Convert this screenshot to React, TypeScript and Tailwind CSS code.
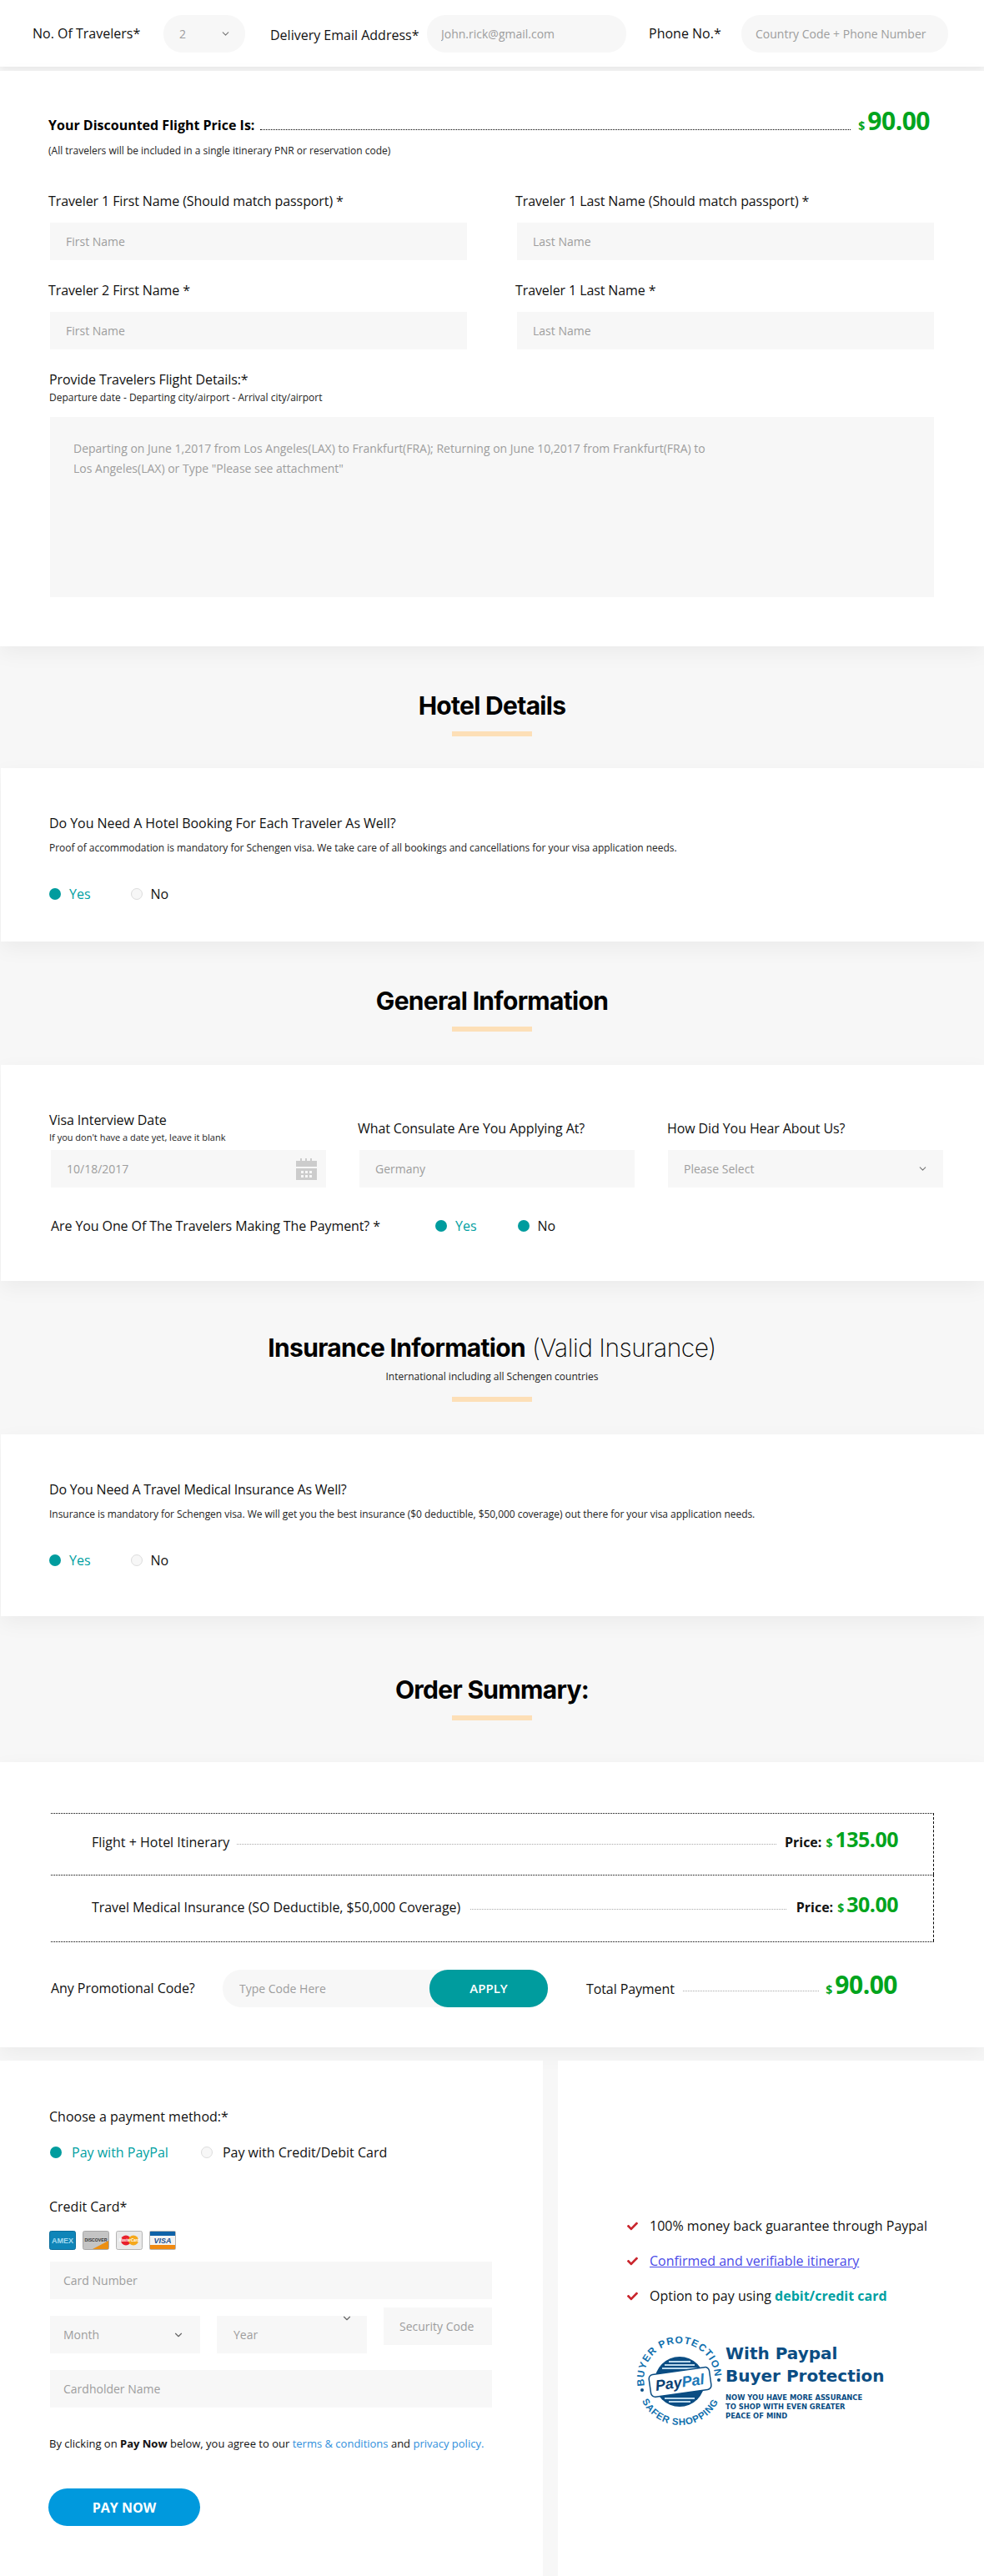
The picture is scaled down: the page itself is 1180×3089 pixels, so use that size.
import { ChevronDown } from 'lucide-react';
import { FaCheck } from 'react-icons/fa';

const Price = ({ value, small }: { value: string; small?: boolean }) => (
  <span className="text-[#00a41d] font-bold whitespace-nowrap">
    <span className="text-[14px] mr-[3px]">$</span>
    <span className={small ? 'text-[25px] tracking-[-0.5px]' : 'text-[30px] tracking-[-0.5px]'}>{value}</span>
  </span>
);

// dotted line between a label and its price, sits on the row's baseline
const Leader = ({ className, lineClassName }: { className: string; lineClassName: string }) => (
  <div className={`flex-1 ${className}`}>
    <div className={`border-b border-dotted ${lineClassName}`} />
  </div>
);

const Heading = ({ title, light, sub, className, barClassName }: { title: string; light?: string; sub?: string; className: string; barClassName: string }) => (
  <div className={`flex flex-col items-center ${className}`}>
    <h2 className="font-['Inter',sans-serif] text-[30px] leading-[34px] font-bold tracking-[-0.7px] text-black">
      {title}
      {light && <span className="font-extralight tracking-[-0.5px]"> {light}</span>}
    </h2>
    {sub && <p className="mt-[10px] text-[12px] leading-[16px] text-[#222]">{sub}</p>}
    <div className={`w-[96px] h-[6px] bg-[#fddfb7] ${barClassName}`} />
  </div>
);

const Radio = ({ label, on, teal, wide }: { label: string; on?: boolean; teal?: boolean; wide?: boolean }) => (
  <label className={`flex items-center leading-[22px] ${wide ? 'gap-[12px]' : 'gap-[10px]'}`}>
    <span className={on ? 'w-[14px] h-[14px] rounded-full bg-[#009c9e]' : 'w-[14px] h-[14px] rounded-full bg-[#f7f7f7] border border-[#dcdcdc]'} />
    <span className={teal ? 'text-[#00a0a2]' : 'text-[#111]'}>{label}</span>
  </label>
);

const TextBox = ({ placeholder, className }: { placeholder: string; className?: string }) => (
  <input
    type="text"
    placeholder={placeholder}
    className={`h-[45px] bg-[#f7f7f7] pl-[19px] text-[14px] outline-none placeholder:text-[#9d9d9d] ${className ?? ''}`}
  />
);

const Label = ({ children, className }: { children: React.ReactNode; className?: string }) => (
  <p className={`leading-[22px] text-[#111] ${className ?? 'tracking-[-0.1px]'}`}>{children}</p>
);

const CalendarIcon = () => (
  <svg width="25" height="26" viewBox="0 0 25 26" fill="#cccccc">
    <path d="M0 3h5V0h2v3h4V0h2v3h4V0h2v3h6v7H0z" />
    <path fillRule="evenodd" d="M0 12h25v14H0zM6 15v3h3v-3zM11 15v3h3v-3zM16 15v3h3v-3zM6 20v3h3v-3zM11 20v3h3v-3zM16 20v3h3v-3z" />
  </svg>
);

const CardIcons = () => (
  <div className="flex gap-[8px] mt-[18px]">
    <svg width="32" height="23" viewBox="0 0 32 23">
      <rect x="0.5" y="0.5" width="31" height="22" rx="2" fill="#0f85b8" stroke="#0b6d9b" />
      <text x="16" y="15" textAnchor="middle" fontSize="9" fontWeight="700" fontFamily="Liberation Sans" fill="#a5dcf2">AMEX</text>
    </svg>
    <svg width="32" height="23" viewBox="0 0 32 23">
      <rect x="0.5" y="0.5" width="31" height="22" rx="2" fill="#c4c4c4" stroke="#a8a8a8" />
      <path d="M31 12v10H12z" fill="#ec8f12" />
      <text x="16" y="13" textAnchor="middle" fontSize="5.2" fontWeight="700" fontFamily="Liberation Sans" fill="#333">DISCOVER</text>
    </svg>
    <svg width="32" height="23" viewBox="0 0 32 23">
      <rect x="0.5" y="0.5" width="31" height="22" rx="2" fill="#e9e9e9" stroke="#b4b4b4" />
      <circle cx="12" cy="11.5" r="6" fill="#e8202c" />
      <circle cx="21" cy="11.5" r="6" fill="#f5a81c" />
      <text x="16" y="13" textAnchor="middle" fontSize="4.5" fontStyle="italic" fontWeight="700" fontFamily="Liberation Sans" fill="#fff">MasterCard</text>
    </svg>
    <svg width="32" height="23" viewBox="0 0 32 23">
      <rect x="0.5" y="0.5" width="31" height="22" rx="1" fill="#f4f4f4" stroke="#b4b4b4" />
      <rect x="1" y="1" width="30" height="5" fill="#0f62a8" />
      <rect x="1" y="17" width="30" height="5" fill="#f08a12" />
      <text x="16" y="15" textAnchor="middle" fontSize="9" fontStyle="italic" fontWeight="700" fontFamily="Liberation Sans" fill="#1b4f8e">VISA</text>
    </svg>
  </div>
);

const BuyerLogo = () => (
  <svg width="110" height="125" viewBox="0 0 110 125" className="shrink-0">
    <defs>
      <path id="arcTop" d="M13 70A42.5 42.5 0 1 1 97 58" />
      <path id="arcBottom" d="M10 88A50.5 50.5 0 0 0 106 72" />
    </defs>
    <circle cx="55" cy="65" r="30" fill="#0b4d83" />
    <g fill="#bcd9ec">
      <rect x="42" y="40" width="26" height="2" />
      <rect x="37" y="44" width="36" height="2" />
      <rect x="34" y="48" width="42" height="2" />
      <rect x="37" y="84" width="36" height="2" />
      <rect x="42" y="88" width="26" height="2" />
    </g>
    <g transform="rotate(-8 55 65)">
      <rect x="19" y="52" width="73" height="27" rx="5" fill="#ffffff" stroke="#0b4d83" strokeWidth="1.5" />
      <text x="55" y="72" textAnchor="middle" fontSize="18" fontWeight="700" fontStyle="italic" fontFamily="Liberation Sans" fill="#0b3f73">
        Pay<tspan fill="#1c78b8">Pal</tspan>
      </text>
    </g>
    <text fontSize="12" fontWeight="700" fontFamily="Liberation Sans" fill="#0f6fae" letterSpacing="1">
      <textPath href="#arcTop">BUYER PROTECTION</textPath>
    </text>
    <text fontSize="11.5" fontWeight="700" fontFamily="Liberation Sans" fill="#0f6fae" letterSpacing="0.8">
      <textPath href="#arcBottom">SAFER SHOPPING</textPath>
    </text>
    <circle cx="10" cy="75" r="2" fill="#0b4d83" />
    <circle cx="102" cy="63" r="2" fill="#0b4d83" />
  </svg>
);

export default function App() {
  return (
    <div className="font-['Open_Sans',sans-serif] text-[16px] bg-[#f7f7f7] text-[#111] min-h-[3089px] overflow-hidden">
      {/* top bar */}
      <div className="h-[80px] bg-white flex items-center pl-[39px] shadow-[0_3px_8px_rgba(0,0,0,0.06)]">
        <span className="w-[157px] whitespace-nowrap">No. Of Travelers*</span>
        <div className="w-[98px] h-[45px] rounded-[22px] bg-[#f7f7f7] flex items-center justify-between pl-[19px] pr-[17px] text-[#9d9d9d] text-[14px]">
          2 <ChevronDown size={13} color="#777" />
        </div>
        <span className="w-[188px] ml-[30px] mt-[4px] whitespace-nowrap">Delivery Email Address*</span>
        <input placeholder="John.rick@gmail.com" className="w-[239px] h-[45px] rounded-[22px] bg-[#f7f7f7] pl-[17px] text-[14px] outline-none placeholder:text-[#9d9d9d]" />
        <span className="w-[111px] ml-[27px] -mt-[1px] whitespace-nowrap">Phone No.*</span>
        <input placeholder="Country Code + Phone Number" className="w-[248px] h-[45px] rounded-[22px] bg-[#f7f7f7] pl-[17px] text-[14px] outline-none placeholder:text-[#9d9d9d]" />
      </div>

      {/* flight details */}
      <section className="mt-[5px] bg-white pt-[42px] pb-[59px] px-[60px] shadow-[0_8px_24px_rgba(0,0,0,0.05)]">
        <div className="flex items-baseline -ml-[2px] h-[36px] leading-[36px]">
          <span className="font-bold text-black whitespace-nowrap">Your Discounted Flight Price Is:</span>
          <Leader className="ml-[7px] mr-[9px]" lineClassName="border-black" />
          <Price value="90.00" />
          <span className="w-[5px]" />
        </div>
        <p className="mt-[10px] -ml-[2px] text-[12px] leading-[16px] text-[#222]">(All travelers will be included in a single itinerary PNR or reservation code)</p>

        <div className="mt-[41px] grid grid-cols-2 gap-x-[60px] gap-y-[25px]">
          <div>
            <div className="-ml-[2px]"><Label>Traveler 1 First Name (Should match passport) *</Label></div>
            <TextBox placeholder="First Name" className="w-full mt-[15px]" />
          </div>
          <div>
            <div className="-ml-[2px]"><Label>Traveler 1 Last Name (Should match passport) *</Label></div>
            <TextBox placeholder="Last Name" className="w-full mt-[15px]" />
          </div>
          <div>
            <div className="-ml-[2px]"><Label>Traveler 2 First Name *</Label></div>
            <TextBox placeholder="First Name" className="w-full mt-[15px]" />
          </div>
          <div>
            <div className="-ml-[2px]"><Label>Traveler 1 Last Name *</Label></div>
            <TextBox placeholder="Last Name" className="w-full mt-[15px]" />
          </div>
        </div>

        <div className="mt-[25px] -ml-[1px]"><Label>Provide Travelers Flight Details:*</Label></div>
        <p className="mt-[3px] -ml-[1px] text-[12px] leading-[16px] text-[#222]">Departure date - Departing city/airport - Arrival city/airport</p>
        <textarea
          className="block mt-[15px] w-full h-[216px] bg-[#f7f7f7] pt-[26px] pl-[28px] pr-[270px] text-[14px] leading-[24px] outline-none resize-none placeholder:text-[#9d9d9d]"
          placeholder={'Departing on June 1,2017 from Los Angeles(LAX) to Frankfurt(FRA); Returning on June 10,2017 from Frankfurt(FRA) to Los Angeles(LAX) or Type "Please see attachment"'}
        />
      </section>

      <Heading title="Hotel Details" className="pt-[54px] h-[146px]" barClassName="mt-[14px]" />
      <section className="ml-px h-[208px] bg-white pt-[55px] pl-[58px] shadow-[0_8px_24px_rgba(0,0,0,0.05)]">
        <Label className="tracking-[-0.06px]">Do You Need A Hotel Booking For Each Traveler As Well?</Label>
        <p className="mt-[11px] text-[12px] leading-[16px] tracking-[-0.03px] text-[#222]">Proof of accommodation is mandatory for Schengen visa. We take care of all bookings and cancellations for your visa application needs.</p>
        <div className="flex gap-[48px] mt-[36px]">
          <Radio label="Yes" on teal />
          <Radio label="No" />
        </div>
      </section>

      <Heading title="General Information" className="pt-[54px] h-[148px]" barClassName="mt-[14px]" />
      <section className="ml-px h-[259px] bg-white pt-[55px] pl-[60px] pr-[49px] shadow-[0_8px_24px_rgba(0,0,0,0.05)]">
        <div className="grid grid-cols-3 gap-x-[40px] items-end">
          <div>
            <div className="-ml-[2px]"><Label>Visa Interview Date</Label></div>
            <p className="-ml-[2px] mt-[2px] text-[11px] leading-[16px] text-[#222]">If you don't have a date yet, leave it blank</p>
            <div className="mt-[7px] h-[45px] bg-[#f7f7f7] pl-[19px] pr-[11px] flex items-center justify-between text-[14px] text-[#9d9d9d]">
              10/18/2017 <CalendarIcon />
            </div>
          </div>
          <div>
            <div className="-ml-[2px]"><Label>What Consulate Are You Applying At?</Label></div>
            <TextBox placeholder="Germany" className="w-full mt-[15px]" />
          </div>
          <div>
            <div className="-ml-[1px]"><Label>How Did You Hear About Us?</Label></div>
            <div className="mt-[15px] h-[45px] bg-[#f7f7f7] pl-[19px] pr-[18px] flex items-center justify-between text-[14px] text-[#9d9d9d]">
              Please Select <ChevronDown size={13} color="#777" />
            </div>
          </div>
        </div>
        <div className="mt-[35px] flex items-center">
          <span className="w-[461px] tracking-[-0.1px] leading-[22px]">Are You One Of The Travelers Making The Payment? *</span>
          <div className="flex gap-[49px]">
            <Radio label="Yes" on teal />
            <Radio label="No" on />
          </div>
        </div>
      </section>

      <Heading
        title="Insurance Information"
        light="(Valid Insurance)"
        sub="International including all Schengen countries"
        className="pt-[63px] h-[184px]"
        barClassName="mt-[16px]"
      />
      <section className="ml-px h-[218px] bg-white pt-[55px] pl-[58px] shadow-[0_8px_24px_rgba(0,0,0,0.05)]">
        <Label className="tracking-[-0.2px]">Do You Need A Travel Medical Insurance As Well?</Label>
        <p className="mt-[11px] text-[12px] leading-[16px] tracking-[-0.04px] text-[#222]">Insurance is mandatory for Schengen visa. We will get you the best insurance ($0 deductible, $50,000 coverage) out there for your visa application needs.</p>
        <div className="flex gap-[48px] mt-[36px]">
          <Radio label="Yes" on teal />
          <Radio label="No" />
        </div>
      </section>

      <Heading title="Order Summary:" className="pt-[71px] h-[175px]" barClassName="mt-[14px]" />
      <section className="h-[342px] bg-white pt-[61px] pl-[61px] shadow-[0_8px_24px_rgba(0,0,0,0.05)]">
        <div className="w-[1059px] border-b border-dotted border-black">
          <div className="h-[74px] border-t border-r border-black [border-top-style:dotted] [border-right-style:dashed]">
            <div className="flex items-baseline h-[30px] mt-[15px] leading-[30px] pl-[49px] pr-[42px]">
              <span className="whitespace-nowrap">Flight + Hotel Itinerary</span>
              <Leader className="ml-[9px] mr-[10px] pb-[3px]" lineClassName="border-[#aaaaaa]" />
              <span className="font-bold mr-[5px]">Price:</span>
              <Price value="135.00" small />
            </div>
          </div>
          <div className="h-[80px] border-t border-r border-black [border-top-style:dotted] [border-right-style:dashed]">
            <div className="flex items-baseline h-[30px] mt-[19px] leading-[30px] pl-[49px] pr-[42px]">
              <span className="tracking-[-0.06px] whitespace-nowrap">Travel Medical Insurance (SO Deductible, $50,000 Coverage)</span>
              <Leader className="ml-[12px] mr-[12px] pb-[3px]" lineClassName="border-[#aaaaaa]" />
              <span className="font-bold mr-[5px]">Price:</span>
              <Price value="30.00" small />
            </div>
          </div>
        </div>
        <div className="mt-[33px] h-[45px] flex items-center">
          <span className="w-[206px] -mt-[2px] tracking-[-0.06px] whitespace-nowrap">Any Promotional Code?</span>
          <div className="relative w-[390px] h-[45px] rounded-[22px] bg-[#f7f7f7]">
            <input placeholder="Type Code Here" className="w-[248px] h-[45px] pl-[20px] text-[14px] bg-transparent outline-none placeholder:text-[#9d9d9d]" />
            <button className="absolute right-0 top-0 w-[142px] h-[45px] rounded-[22px] bg-[#009c9e] text-white text-[15px] font-semibold">APPLY</button>
          </div>
          <div className="ml-[46px] w-[373px] flex items-baseline leading-[36px] mb-[3px]">
            <span className="tracking-[-0.1px] whitespace-nowrap">Total Payment</span>
            <Leader className="ml-[10px] mr-[8px] pb-[3px]" lineClassName="border-[#aaaaaa]" />
            <Price value="90.00" />
          </div>
        </div>
      </section>

      {/* payment */}
      <div className="mt-[16px] h-[618px] flex justify-between">
        <div className="w-[651px] bg-white pt-[56px] pl-[59px]">
          <p className="leading-[22px]">Choose a payment method:*</p>
          <div className="flex gap-[39px] mt-[21px]">
            <div className="ml-px"><Radio label="Pay with PayPal" on teal wide /></div>
            <Radio label="Pay with Credit/Debit Card" wide />
          </div>
          <p className="mt-[43px] leading-[22px]">Credit Card*</p>
          <CardIcons />
          <input placeholder="Card Number" className="block ml-px mt-[14px] w-[530px] h-[45px] bg-[#f7f7f7] pl-[16px] text-[14px] outline-none placeholder:text-[#9d9d9d]" />
          <div className="ml-px mt-[10px] flex gap-[20px] items-start">
            <div className="mt-[10px] w-[180px] h-[45px] bg-[#f7f7f7] pl-[16px] pr-[19px] flex items-center justify-between text-[14px] text-[#9d9d9d]">
              Month <ChevronDown size={14} color="#666" />
            </div>
            <div className="relative mt-[10px] w-[180px] h-[45px] bg-[#f7f7f7] pl-[20px] flex items-center text-[14px] text-[#9d9d9d]">
              Year
              <ChevronDown size={14} color="#666" className="absolute right-[17px] -top-[4px]" />
            </div>
            <input placeholder="Security Code" className="w-[130px] h-[45px] bg-[#f7f7f7] pl-[19px] text-[14px] outline-none placeholder:text-[#9d9d9d]" />
          </div>
          <input placeholder="Cardholder Name" className="block ml-px mt-[20px] w-[530px] h-[45px] bg-[#f7f7f7] pl-[16px] text-[14px] outline-none placeholder:text-[#9d9d9d]" />
          <p className="mt-[33px] text-[13px] leading-[20px] whitespace-nowrap">
            By clicking on <b>Pay Now</b> below, you agree to our <span className="text-[#2f8fdc]">terms &amp; conditions</span> and <span className="text-[#2f8fdc]">privacy policy.</span>
          </p>
          <button className="mt-[44px] -ml-px w-[182px] h-[45px] rounded-[23px] bg-[#0099dd] text-white font-bold">PAY NOW</button>
        </div>

        <div className="w-[511px] bg-white pt-[187px] pl-[83px]">
          <div className="flex flex-col gap-[20px] leading-[22px]">
            <div className="flex items-center gap-[14px]">
              <FaCheck size={13} color="#c9252d" />
              <span>100% money back guarantee through Paypal</span>
            </div>
            <div className="flex items-center gap-[14px]">
              <FaCheck size={13} color="#c9252d" />
              <a className="text-[#4a4ae8] underline">Confirmed and verifiable itinerary </a>
            </div>
            <div className="flex items-center gap-[14px]">
              <FaCheck size={13} color="#c9252d" />
              <span>Option to pay using <b className="text-[#00a0a2]">debit/credit card</b></span>
            </div>
          </div>
          <div className="mt-[27px] ml-[8px] flex font-['DejaVu_Sans',sans-serif] font-bold text-[#0b4d83]">
            <BuyerLogo />
            <div className="pt-[17px] whitespace-nowrap">
              <p className="text-[20px] leading-[28px]">With Paypal</p>
              <p className="text-[20px] leading-[27px]">Buyer Protection</p>
              <div className="mt-[7px] text-[8.4px] leading-[11px]">
                <p>NOW YOU HAVE MORE ASSURANCE</p>
                <p>TO SHOP WITH EVEN GREATER</p>
                <p>PEACE OF MIND</p>
              </div>
            </div>
          </div>
        </div>
      </div>
    </div>
  );
}
